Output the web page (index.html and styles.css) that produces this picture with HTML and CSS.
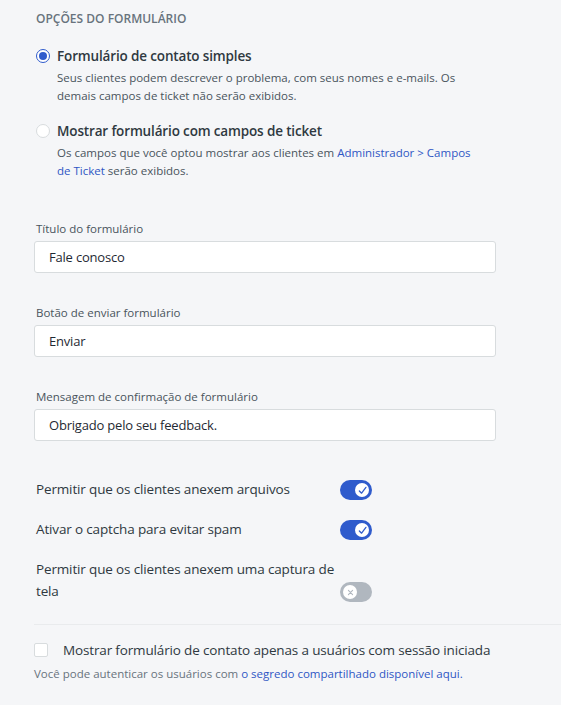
FILE: index.html
```html
<!DOCTYPE html>
<html lang="pt">
<head>
<meta charset="utf-8">
<link rel="stylesheet" href="styles.css">
</head>
<body>
<div class="page">
  <h2 class="section-title">OPÇÕES DO FORMULÁRIO</h2>

  <div class="radio-group">
    <div class="radio-item">
      <span class="radio checked"></span>
      <div class="radio-body">
        <div class="radio-label">Formulário de contato simples</div>
        <p class="hint">Seus clientes podem descrever o problema, com seus nomes e e-mails. Os demais campos de ticket não serão exibidos.</p>
      </div>
    </div>
    <div class="radio-item">
      <span class="radio"></span>
      <div class="radio-body">
        <div class="radio-label">Mostrar formulário com campos de ticket</div>
        <p class="hint">Os campos que você optou mostrar aos clientes em <a class="link">Administrador &gt; Campos</a><br><a class="link">de Ticket</a> serão exibidos.</p>
      </div>
    </div>
  </div>

  <div class="fields">
    <div class="field">
      <label class="field-label">Título do formulário</label>
      <div class="input">Fale conosco</div>
    </div>
    <div class="field">
      <label class="field-label">Botão de enviar formulário</label>
      <div class="input">Enviar</div>
    </div>
    <div class="field">
      <label class="field-label">Mensagem de confirmação de formulário</label>
      <div class="input">Obrigado pelo seu feedback.</div>
    </div>
  </div>

  <div class="toggles">
    <div class="toggle-row">
      <span class="toggle-text">Permitir que os clientes anexem arquivos</span>
      <span class="toggle on"><span class="knob"><svg viewBox="0 0 10 10" width="9" height="9"><path d="M1.5 5.5 L4 8 L8.8 1.5" fill="none" stroke="#2f5bcc" stroke-width="1.4" stroke-linecap="round" stroke-linejoin="round"/></svg></span></span>
    </div>
    <div class="toggle-row">
      <span class="toggle-text">Ativar o captcha para evitar spam</span>
      <span class="toggle on"><span class="knob"><svg viewBox="0 0 10 10" width="9" height="9"><path d="M1.5 5.5 L4 8 L8.8 1.5" fill="none" stroke="#2f5bcc" stroke-width="1.4" stroke-linecap="round" stroke-linejoin="round"/></svg></span></span>
    </div>
    <div class="toggle-row">
      <span class="toggle-text">Permitir que os clientes anexem uma captura de tela</span>
      <span class="toggle off"><span class="knob"><svg viewBox="0 0 10 10" width="7" height="7"><path d="M2 2 L8 8 M8 2 L2 8" fill="none" stroke="#b0b7bf" stroke-width="1.6" stroke-linecap="round"/></svg></span></span>
    </div>
  </div>

  <div class="divider"></div>

  <div class="check-row">
    <span class="checkbox"></span>
    <span class="check-label">Mostrar formulário de contato apenas a usuários com sessão iniciada</span>
  </div>
  <p class="hint foot">Você pode autenticar os usuários com <a class="link">o segredo compartilhado disponível aqui.</a></p>
</div>
</body>
</html>
```
FILE: styles.css
```css
html, body {
  margin: 0;
  padding: 0;
  background: #f5f6f8;
}
body {
  font-family: "Open Sans", "Noto Sans", sans-serif;
  color: #2f3941;
}
.page {
  padding: 10px 0 0 36px;
}
.section-title {
  margin: 0;
  font-size: 12px;
  font-weight: 600;
  color: #68737d;
  line-height: 18px;
  letter-spacing: 0;
}
.radio-group {
  margin-top: 18px;
  display: flex;
  flex-direction: column;
  gap: 16px;
}
.radio-item {
  display: flex;
  gap: 7px;
}
.radio {
  flex: none;
  width: 12px;
  height: 12px;
  margin-top: 3px;
  border: 1px solid #d8dcde;
  border-radius: 50%;
  background: #fff;
  position: relative;
}
.radio.checked {
  border-color: #2f5bcc;
}
.radio.checked::after {
  content: "";
  position: absolute;
  left: 2px;
  top: 2px;
  width: 8px;
  height: 8px;
  border-radius: 50%;
  background: #2f5bcc;
}
.radio-label {
  font-size: 13.5px;
  font-weight: 600;
  line-height: 20px;
  color: #2f3941;
  letter-spacing: -0.15px;
}
.hint {
  margin: 3px 0 0;
  font-size: 11.5px;
  line-height: 18px;
  color: #49545c;
  max-width: 420px;
}
.link {
  color: #2f56c4;
  text-decoration: none;
  white-space: nowrap;
}
.fields {
  margin-top: 41px;
  display: flex;
  flex-direction: column;
  gap: 32px;
  width: 462px;
  margin-left: -2px;
}
.field-label {
  display: block;
  font-size: 11.5px;
  line-height: 16px;
  color: #49545c;
  padding-left: 2px;
  margin-bottom: 4px;
}
.input {
  height: 30px;
  border: 1px solid #d8dcde;
  border-radius: 3px;
  background: #fff;
  font-size: 13px;
  font-weight: 500;
  letter-spacing: -0.2px;
  line-height: 30px;
  padding-left: 14px;
  color: #1f2a33;
}
.toggles {
  margin-top: 37px;
  display: flex;
  flex-direction: column;
  gap: 18px;
}
.toggle-row {
  display: flex;
  align-items: flex-end;
  width: 336px;
  justify-content: space-between;
}
.toggle-text {
  font-size: 13.5px;
  line-height: 22px;
  color: #2f3941;
  width: 304px;
  letter-spacing: -0.15px;
}
.toggle {
  flex: none;
  width: 32px;
  height: 20px;
  border-radius: 10px;
  display: flex;
  align-items: center;
}
.toggle.on {
  background: #2f5bcc;
  justify-content: flex-end;
}
.toggle.off {
  background: #b0b7bf;
  justify-content: flex-start;
}
.knob {
  width: 14px;
  height: 14px;
  margin: 0 3px;
  border-radius: 50%;
  background: #fff;
  display: flex;
  align-items: center;
  justify-content: center;
}
.divider {
  margin: 22px 0 0 -2px;
  height: 1px;
  background: #e9ebed;
}
.check-row {
  display: flex;
  align-items: center;
  gap: 15px;
  margin-top: 15px;
  margin-left: -2px;
}
.checkbox {
  flex: none;
  width: 12px;
  height: 12px;
  border: 1px solid #d8dcde;
  border-radius: 2px;
  background: #fff;
}
.check-label {
  font-size: 13.5px;
  line-height: 20px;
  color: #2f3941;
  letter-spacing: -0.15px;
}
.hint.foot {
  margin-top: 5px;
  margin-left: -2px;
  color: #68737d;
  max-width: none;
}
```
